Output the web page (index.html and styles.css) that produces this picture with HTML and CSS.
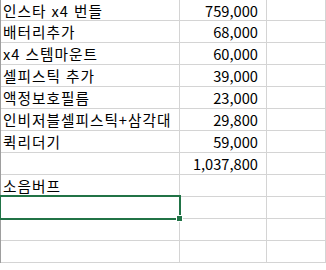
FILE: index.html
```html
<!DOCTYPE html>
<html lang="ko">
<head>
<meta charset="utf-8">
<link rel="stylesheet" href="styles.css">
</head>
<body>
<div class="sheet">
  <div class="cell txt">인스타 x4 번들</div><div class="cell num">759,000</div><div class="cell"></div>
  <div class="cell txt">배터리추가</div><div class="cell num">68,000</div><div class="cell"></div>
  <div class="cell txt">x4 스템마운트</div><div class="cell num">60,000</div><div class="cell"></div>
  <div class="cell txt">셀피스틱 추가</div><div class="cell num">39,000</div><div class="cell"></div>
  <div class="cell txt">액정보호필름</div><div class="cell num">23,000</div><div class="cell"></div>
  <div class="cell txt">인비저블셀피스틱+삼각대</div><div class="cell num">29,800</div><div class="cell"></div>
  <div class="cell txt">퀵리더기</div><div class="cell num">59,000</div><div class="cell"></div>
  <div class="cell txt"></div><div class="cell num">1,037,800</div><div class="cell"></div>
  <div class="cell txt">소음버프</div><div class="cell num"></div><div class="cell"></div>
  <div class="cell txt selected"><span class="sel-box"></span><span class="fill-handle"></span></div><div class="cell num"></div><div class="cell"></div>
  <div class="cell txt"></div><div class="cell num"></div><div class="cell"></div>
  <div class="cell txt"></div><div class="cell num"></div><div class="cell"></div>
</div>
</body>
</html>
```
FILE: styles.css
```css
html, body {
  margin: 0;
  padding: 0;
  background: #ffffff;
}
body {
  width: 326px;
  height: 270px;
  overflow: hidden;
  font-family: "Noto Sans CJK KR", "Noto Sans", sans-serif;
  font-size: 14.67px;
  color: #000;
}
.sheet {
  display: grid;
  grid-template-columns: 179px 87px 1fr;
  grid-template-rows: 21px repeat(11, 22px);
  border-left: 1px solid #9e9e9e;
}
.cell {
  border-right: 1px solid #d4d4d4;
  border-bottom: 1px solid #d4d4d4;
  display: flex;
  align-items: center;
  white-space: nowrap;
  overflow: hidden;
  line-height: 21px;
}
.txt {
  padding-left: 2px;
  letter-spacing: 1px;
}
.num {
  justify-content: flex-end;
  padding-right: 8px;
}
.selected {
  position: relative;
  overflow: visible;
  z-index: 2;
}
.sel-box {
  position: absolute;
  left: -2px;
  top: -2px;
  right: -2px;
  bottom: -2px;
  border: 2px solid #217346;
}
.fill-handle {
  position: absolute;
  right: -4px;
  bottom: -4px;
  width: 5px;
  height: 5px;
  background: #217346;
  border: 1px solid #fff;
}
```
